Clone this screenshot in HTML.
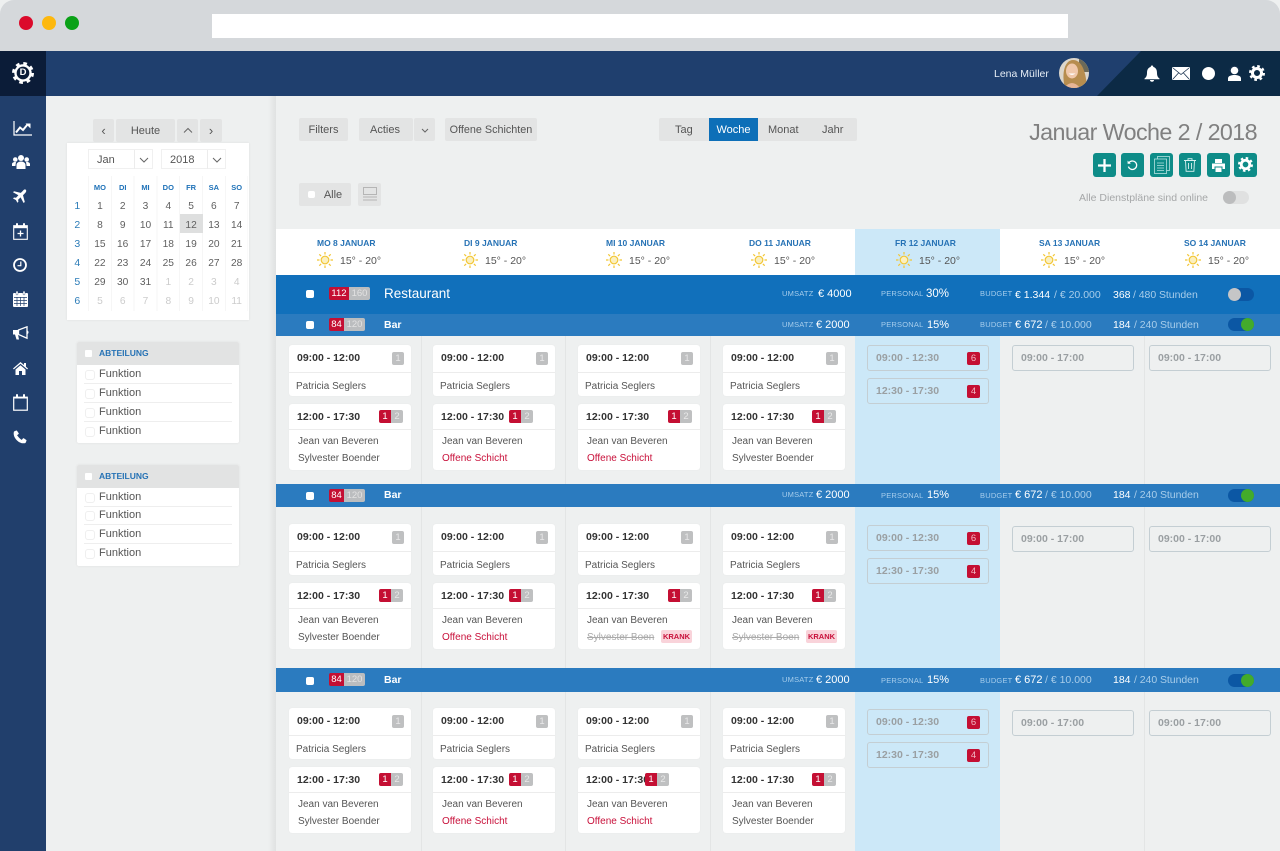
<!DOCTYPE html>
<html lang="de"><head><meta charset="utf-8"><title>Dienstplan</title>
<style>
*{box-sizing:border-box}
html,body{margin:0;padding:0;width:1280px;height:851px;overflow:hidden;background:#eef0f0;font-family:"Liberation Sans",Arial,sans-serif;color:#555}
body{filter:blur(.3px)}
.x{position:absolute}
.t{position:absolute;white-space:nowrap;line-height:14px}
svg{position:absolute;display:block}
.btn{position:absolute;background:#e3e4e4;border-radius:2px;font-size:11px;color:#555;text-align:center;line-height:24px;height:23px;white-space:nowrap}
.cal{position:absolute;left:66px;top:179px;width:183px;display:grid;grid-template-columns:22.5px repeat(7,22.8px);grid-template-rows:18px repeat(6,19px);font-size:10.2px;text-align:center;line-height:19px;color:#5f5f5f}
.cal b{font-size:7.5px;color:#1f72b8;line-height:18px}
.cal u{text-decoration:none;color:#2c7cb8;font-size:10.5px}
.cal s{text-decoration:none;color:#ccc}
.sel{position:absolute;background:#fff;height:20px;border:1px solid #f0f0f0;font-size:11px;line-height:20px;padding-left:8px}
.pn{position:absolute;left:77px;width:162px;height:101px;background:#fff;border-radius:2px;box-shadow:0 0 2px #ddd}
.pn .h{position:absolute;left:0;top:0;width:162px;height:23px;background:#e2e3e3;border-radius:2px 2px 0 0}
.pn .h i{position:absolute;left:8px;top:8px;width:7px;height:7px;background:#fff;border-radius:1px}
.pn .h b{position:absolute;left:22px;top:5px;font-size:8.5px;line-height:13px;color:#2672b5}
.pn .f{position:absolute;left:7px;width:148px;height:19px;font-size:11px;line-height:19px;padding-left:15px;color:#555;border-bottom:1px solid #eee}
.pn .f:before{content:"";position:absolute;left:1px;top:5px;width:8px;height:8px;border:1px solid #efefef;border-radius:3px}
.pn .f:last-child{border:0}
.dh{position:absolute;top:237px;font-size:8.5px;font-weight:bold;color:#2672b5;line-height:12px;white-space:nowrap}
.tm{position:absolute;top:254px;font-size:10.5px;color:#555;line-height:14px;white-space:nowrap}
.row{position:absolute;left:276px;width:1004px;background:#2b7bbf;color:#fff}
.row .t{color:#fff}
.lb{font-size:7.5px;color:#a6cdec!important;letter-spacing:.2px}
.n{font-size:11px}
.f2{color:#a8cdea!important}
.ck{position:absolute;left:30px;width:8px;height:8px;background:#fff;border-radius:2px}
.bd{position:absolute;left:53px;height:13px;font-size:9.5px;line-height:13px;text-align:center;color:#fff;font-style:normal}
.bd.r{background:#c40f33;border-radius:2px 0 0 2px}
.bd.g{background:#bbbdbf;border-radius:0 2px 2px 0;color:#e2e2e2}
.tg{position:absolute;left:952px;width:26px;height:13px;border-radius:7px;background:#0b57a4}
.tg i{position:absolute;top:0;width:13px;height:13px;border-radius:50%}
.sec{position:absolute;left:0;width:1280px;height:130px}
.c{position:absolute;width:122px;background:#fff;border-radius:3px;box-shadow:0 0 1px #e0e0e0}
.a{top:0;height:51px}
.b{top:59px;height:66px}
.c:before{content:"";position:absolute;left:0;right:0;height:1px;background:#ececec}
.a:before{top:27px}.b:before{top:25px}
.c b{position:absolute;left:8px;top:6px;font-size:10.5px;line-height:14px;color:#333;white-space:nowrap}
.c p{position:absolute;margin:0;font-size:10px;line-height:14px;color:#555;white-space:nowrap;left:7px}
.a p{top:35px}
.b p{left:9px;top:31px}
.b p+p{top:48px}
.c p.o{color:#c8103a}
.c p.k{color:#aaa;text-decoration:line-through}
.c em{position:absolute;font-style:normal;font-size:9.5px;line-height:13px;height:13px;width:12px;text-align:center;color:#fff;top:6px}
.c em.r{background:#c40f33;border-radius:2px 0 0 2px}
.c em.g{background:#bfc0c1;border-radius:0 2px 2px 0;color:#e8e8e8}
.c em.s{background:#bfc0c1;border-radius:2px;color:#e8e8e8;top:7px}
.kr{position:absolute;left:83px;top:47px;width:31px;height:13px;background:#f9d3da;border-radius:2px;color:#c8103a;font-size:7.5px;font-weight:bold;line-height:13px;text-align:center}
.o2{position:absolute;width:122px;height:26px;border:1px solid #c4ced3;border-radius:3px;font-size:10.5px;font-weight:bold;color:#9a9fa2;line-height:24px;padding-left:8px;white-space:nowrap}
.o2 i{position:absolute;right:8px;top:6px;width:13px;height:13px;background:#c40f33;border-radius:2px;color:#f0b8c4;font-size:9.5px;line-height:13px;text-align:center;font-style:normal;font-weight:normal}
.vl{position:absolute;width:1px;top:336px;bottom:0;background:#e3e5e5}
.tb{position:absolute;top:153px;width:23px;height:24px;border-radius:3px;background:#0e8c88}
</style></head><body>

<!-- browser chrome -->
<div class="x" style="left:0;top:0;width:1280px;height:51px;background:#d5d8db;border-radius:14px 14px 0 0"></div>
<div class="x" style="left:212px;top:14px;width:856px;height:24px;background:#fff"></div>
<div class="x" style="left:19px;top:16px;width:14px;height:14px;border-radius:50%;background:#db0a2b"></div>
<div class="x" style="left:42px;top:16px;width:14px;height:14px;border-radius:50%;background:#fdb80e"></div>
<div class="x" style="left:65px;top:16px;width:14px;height:14px;border-radius:50%;background:#0aa117"></div>

<!-- header -->
<div class="x" style="left:0;top:51px;width:1280px;height:45px;background:#1f3f6e"></div>
<svg style="left:1097px;top:51px" width="183" height="45"><polygon points="44,0 183,0 183,45 0,45" fill="#0c2a45"/></svg>
<div class="x" style="left:0;top:51px;width:46px;height:45px;background:#0b1c38"></div>
<svg style="left:12px;top:62px" width="22" height="22" viewBox="0 0 24 24"><circle cx="12" cy="12" r="10.500" fill="none" stroke="#fff" stroke-width="3" stroke-dasharray="4 4.250"/><circle cx="12" cy="12" r="8.200" fill="none" stroke="#fff" stroke-width="2.600"/></svg>
<div class="t" style="left:13px;top:66px;width:20px;text-align:center;font-size:9.500px;font-weight:bold;color:#fff">D</div>
<div class="t" style="left:994px;top:67px;font-size:10.500px;color:#e6edf5">Lena Müller</div>
<svg style="left:1059px;top:58px" width="30" height="30" viewBox="0 0 30 30"><defs><clipPath id="av"><circle cx="15" cy="15" r="15"/></clipPath></defs><g clip-path="url(#av)"><rect width="30" height="30" fill="#dcd6cc"/><rect x="20" width="10" height="14" fill="#6d6a58"/><path d="M6 30 C2 15 6 2 14 2 C23 2 27 14 28 30Z" fill="#b78d4f"/><ellipse cx="13" cy="13" rx="6" ry="7.500" fill="#f0c8ab"/><path d="M9.500 15.500 q3.500 3 7 0" fill="#fff"/><path d="M5 30 q8 -10 16 0Z" fill="#e7b596"/></g></svg>
<svg style="left:1144px;top:65px" width="16" height="17" viewBox="0 0 16 17"><path d="M8 0.500a1.200 1.200 0 0 1 1.200 1.400C12 2.600 13 5 13 8c0 3 1 4.500 2.500 5.500v.8H.5v-.8C2 12.500 3 11 3 8c0-3 1-5.400 3.800-6.100A1.200 1.200 0 0 1 8 .5z" fill="#fff"/><path d="M6 15a2 1.700 0 0 0 4 0z" fill="#fff"/></svg>
<svg style="left:1172px;top:67px" width="18" height="13" viewBox="0 0 18 13"><rect width="18" height="13" rx="1.500" fill="#fff"/><path d="M1 1l8 6.500L17 1M1 12l5.500-6M17 12l-5.500-6" fill="none" stroke="#1a3350" stroke-width=".8"/></svg>
<div class="x" style="left:1202px;top:67px;width:13px;height:13px;border-radius:50%;background:#fff"></div>
<svg style="left:1228px;top:66px" width="13" height="15" viewBox="0 0 13 15"><circle cx="6.500" cy="4.500" r="3.800" fill="#fff"/><path d="M0 15v-2.500C0 10 3 9 6.500 9S13 10 13 12.500V15z" fill="#fff"/><path d="M1.800 5V4a4.700 4 0 0 1 9.400 0v1" fill="none" stroke="#1a3350" stroke-width=".7"/></svg>
<svg style="left:1249px;top:65px" width="16" height="16" viewBox="0 0 24 24"><circle cx="12" cy="12" r="10.300" fill="none" stroke="#fff" stroke-width="3.400" stroke-dasharray="4 4.090"/><circle cx="12" cy="12" r="6.800" fill="none" stroke="#fff" stroke-width="4.500"/></svg>

<!-- sidebar -->
<div class="x" style="left:0;top:96px;width:46px;height:755px;background:#213f6c"></div>
<svg style="left:13px;top:120px" width="19" height="16" viewBox="0 0 19 16"><path d="M1 1v14h18" fill="none" stroke="#fff" stroke-width="1.200"/><path d="M3 12.500l4-5 3 2.500 4.500-5.500" fill="none" stroke="#fff" stroke-width="2"/><path d="M12.500 3.500h5v5z" fill="#fff"/></svg>
<svg style="left:12px;top:153px" width="18" height="18" viewBox="0 0 18 18"><circle cx="9" cy="5" r="3" fill="#fff"/><circle cx="3.300" cy="6.500" r="2.300" fill="#fff"/><circle cx="14.700" cy="6.500" r="2.300" fill="#fff"/><path d="M4.500 16v-4c0-2 2-3.500 4.500-3.500s4.500 1.500 4.500 3.500v4z" fill="#fff"/><path d="M0 13v-2c0-1 1.300-2 3-2h1l-.6 4zM18 13v-2c0-1-1.300-2-3-2h-1l.6 4z" fill="#fff"/></svg>
<svg style="left:13px;top:189px" width="14" height="14" viewBox="0 0 14 14"><path d="M12.800.8c.9.9.300 2.300-.6 3.200L10 6.200 11.800 13l-1.200 1-3-5.600-2.500 2.400.3 2-1 1-1.500-2.800L0 9.500l1-1 2 .3 2.400-2.500L0 3.300l1-1.100 6.800 1.700L10 1.700c.9-.9 1.900-1.800 2.800-.9z" fill="#fff"/></svg>
<svg style="left:13px;top:223px" width="15" height="17" viewBox="0 0 15 17"><rect x=".7" y="2.700" width="13.600" height="13.600" fill="none" stroke="#fff" stroke-width="1.100"/><rect x=".7" y="2.700" width="13.600" height="2.500" fill="#fff"/><rect x="3" y="0" width="2" height="4" rx="1" fill="#fff"/><rect x="10" y="0" width="2" height="4" rx="1" fill="#fff"/><path d="M7.500 7.500v6M4.500 10.500h6" stroke="#fff" stroke-width="1.300"/></svg>
<svg style="left:13px;top:258px" width="14" height="14" viewBox="0 0 14 14"><circle cx="7" cy="7" r="6" fill="none" stroke="#fff" stroke-width="1.800"/><path d="M7.800 3.500v4.200H4.500" fill="none" stroke="#fff" stroke-width="1.200"/></svg>
<svg style="left:13px;top:291px" width="15" height="16" viewBox="0 0 15 16"><rect y="2" width="15" height="14" rx="1" fill="#fff"/><rect x="3" y="0" width="2" height="4" rx="1" fill="#fff" stroke="#213f6c" stroke-width=".4"/><rect x="10" y="0" width="2" height="4" rx="1" fill="#fff" stroke="#213f6c" stroke-width=".4"/><path d="M1 6.500h13M1 9.500h13M1 12.500h13M4 6v9M7.500 6v9M11 6v9" stroke="#213f6c" stroke-width=".7"/></svg>
<svg style="left:13px;top:326px" width="16" height="15" viewBox="0 0 16 15"><path d="M0 4h5.500v4.500H0z" fill="#fff"/><path d="M5.500 4L14 .8v11.400L5.500 8.500z" fill="none" stroke="#fff" stroke-width="1.300"/><path d="M2 8.500h3l1 5H3.500z" fill="#fff"/><path d="M14.500 4.500a2 2 0 0 1 0 3.500z" fill="#fff"/></svg>
<svg style="left:13px;top:362px" width="15" height="13" viewBox="0 0 15 13"><path d="M7.500 0L15 6.500l-.8.900L7.500 1.800.8 7.400 0 6.500zM2.500 7.500l5-4.200 5 4.200V13H9V9H6v4H2.500z" fill="#fff"/><rect x="11" y="1" width="2" height="3.500" fill="#fff"/></svg>
<svg style="left:13px;top:394px" width="15" height="17" viewBox="0 0 15 17"><rect x=".7" y="3.200" width="13.600" height="13" fill="none" stroke="#fff" stroke-width="1.200"/><rect x=".7" y="3" width="13.600" height="1.500" fill="#fff"/><rect x="3" y="0" width="2" height="4" rx="1" fill="#fff"/><rect x="10" y="0" width="2" height="4" rx="1" fill="#fff"/></svg>
<svg style="left:13px;top:430px" width="14" height="14" viewBox="0 0 14 14"><path d="M3.200.5L1 1.500C.3 3.500.6 7 3.800 10.200 7 13.400 10.500 13.700 12.500 13l1-2.200c.1-.3 0-.6-.2-.8L10.800 8.300c-.3-.2-.6-.1-.8.100L8.800 9.900C7.500 9.200 4.800 6.500 4.100 5.200l1.500-1.200c.2-.2.300-.5.100-.8L4 .7C3.800.5 3.500.4 3.200.5z" fill="#fff"/></svg>

<!-- left panel -->
<div class="x" style="left:46px;top:96px;width:230px;height:755px;background:#eef0f0"></div>
<div class="x" style="left:268px;top:96px;width:8px;height:755px;background:linear-gradient(90deg,#eef0f0,#e0e2e2)"></div>

<div class="btn" style="left:93px;top:119px;width:21px;font-size:13px">&#8249;</div>
<div class="btn" style="left:116px;top:119px;width:59px;font-size:11px">Heute</div>
<div class="btn" style="left:177px;top:119px;width:21px"></div>
<svg style="left:183px;top:127px" width="10" height="7"><path d="M1 5.500L5 1.500l4 4" fill="none" stroke="#666" stroke-width="1"/></svg>
<div class="btn" style="left:200px;top:119px;width:22px;font-size:13px">&#8250;</div>

<div class="x" style="left:67px;top:143px;width:182px;height:177px;background:#fff;box-shadow:0 0 2px #ddd"></div>
<div class="sel" style="left:88px;top:149px;width:65px">Jan</div>
<div class="x" style="left:134px;top:150px;width:1px;height:19px;background:#ececec"></div>
<svg style="left:139px;top:157px" width="10" height="6"><path d="M1 1l4 4 4-4" fill="none" stroke="#666" stroke-width="1"/></svg>
<div class="sel" style="left:161px;top:149px;width:65px">2018</div>
<div class="x" style="left:207px;top:150px;width:1px;height:19px;background:#ececec"></div>
<svg style="left:212px;top:157px" width="10" height="6"><path d="M1 1l4 4 4-4" fill="none" stroke="#666" stroke-width="1"/></svg>
<div class="x" style="left:88px;top:176px;width:160px;height:135px;background:repeating-linear-gradient(90deg,#f6f6f6 0,#f6f6f6 1px,transparent 1px,transparent 22.800px)"></div>
<div class="x" style="left:180px;top:214px;width:23px;height:19px;background:#dedfdf"></div>
<div class="cal">
<span></span><b>MO</b><b>DI</b><b>MI</b><b>DO</b><b>FR</b><b>SA</b><b>SO</b>
<u>1</u><span>1</span><span>2</span><span>3</span><span>4</span><span>5</span><span>6</span><span>7</span>
<u>2</u><span>8</span><span>9</span><span>10</span><span>11</span><span>12</span><span>13</span><span>14</span>
<u>3</u><span>15</span><span>16</span><span>17</span><span>18</span><span>19</span><span>20</span><span>21</span>
<u>4</u><span>22</span><span>23</span><span>24</span><span>25</span><span>26</span><span>27</span><span>28</span>
<u>5</u><span>29</span><span>30</span><span>31</span><s>1</s><s>2</s><s>3</s><s>4</s>
<u>6</u><s>5</s><s>6</s><s>7</s><s>8</s><s>9</s><s>10</s><s>11</s>
</div>

<div class="pn" style="top:342px"><div class="h"><i></i><b>ABTEILUNG</b></div>
<div class="f" style="top:23px">Funktion</div><div class="f" style="top:42px">Funktion</div><div class="f" style="top:61px">Funktion</div><div class="f" style="top:80px">Funktion</div></div>
<div class="pn" style="top:465px"><div class="h"><i></i><b>ABTEILUNG</b></div>
<div class="f" style="top:23px">Funktion</div><div class="f" style="top:41px">Funktion</div><div class="f" style="top:60px">Funktion</div><div class="f" style="top:79px">Funktion</div></div>

<!-- toolbar -->
<div class="btn" style="left:299px;top:118px;width:49px">Filters</div>
<div class="btn" style="left:359px;top:118px;width:54px;padding-right:2px">Acties</div>
<div class="btn" style="left:414px;top:118px;width:21px"></div>
<svg style="left:421px;top:128px" width="8" height="5"><path d="M1 1l3 3 3-3" fill="none" stroke="#666" stroke-width="1"/></svg>
<div class="btn" style="left:445px;top:118px;width:92px;font-size:10.800px">Offene Schichten</div>
<div class="btn" style="left:659px;top:118px;width:198px;border-radius:2px"></div>
<div class="t" style="left:675px;top:123px;font-size:11px">Tag</div>
<div class="x" style="left:709px;top:118px;width:49px;height:23px;background:#0d6fb8;color:#fff;font-size:11px;line-height:24px;text-align:center">Woche</div>
<div class="t" style="left:768px;top:123px;font-size:11px">Monat</div>
<div class="t" style="left:822px;top:123px;font-size:11px">Jahr</div>
<div class="btn" style="left:299px;top:183px;width:52px;height:23px;line-height:25px;padding-left:16px">Alle</div>
<div class="x" style="left:308px;top:191px;width:7px;height:7px;background:#fff;border-radius:2px"></div>
<div class="btn" style="left:358px;top:183px;width:23px;height:23px"></div>
<svg style="left:363px;top:187px" width="14" height="15"><rect x=".5" y=".5" width="13" height="7" fill="none" stroke="#b5b5b5"/><path d="M0 10h14M0 13h14" stroke="#b5b5b5"/></svg>

<div class="t" style="left:1000px;right:23px;top:118px;font-size:23.300px;line-height:28px;color:#808080;text-align:right;letter-spacing:-.6px">Januar Woche 2 / 2018</div>

<div class="tb" style="left:1093px"></div>
<svg style="left:1098px;top:159px" width="13" height="13"><path d="M6.500 0v13M0 6.500h13" stroke="#fff" stroke-width="2.300"/></svg>
<div class="tb" style="left:1121px"></div>
<svg style="left:1126px;top:159px" width="12" height="12" viewBox="0 0 15 14"><path d="M3.500 4.500A5.300 5.300 0 1 1 3 9" fill="none" stroke="#fff" stroke-width="1.600"/><path d="M2 1.500v4h4z" fill="#fff"/></svg>
<div class="tb" style="left:1150px"></div>
<svg style="left:1154px;top:156px" width="16" height="18" viewBox="0 0 16 18"><rect x="3.500" y=".5" width="12" height="14" fill="none" stroke="#b5e2e0" stroke-width=".8"/><rect x=".5" y="3" width="12" height="14.500" fill="#0e8c88" stroke="#b5e2e0" stroke-width=".8"/><path d="M3 7h7M3 9.500h7M3 12h7M3 14.500h7" stroke="#b5e2e0" stroke-width=".8"/></svg>
<div class="tb" style="left:1179px;width:22px"></div>
<svg style="left:1184px;top:158px" width="12" height="14" viewBox="0 0 12 14"><path d="M0 2.500h12M4 2.500V.7h4v1.800M1.500 2.500l.6 10.800h7.800l.6-10.800M4.500 5v6M7.500 5v6" fill="none" stroke="#d8f0ef" stroke-width=".9"/></svg>
<div class="tb" style="left:1207px"></div>
<svg style="left:1212px;top:159px" width="13" height="13" viewBox="0 0 13 13"><path d="M3 0h7v4H3zM0 4.500h13V10h-2.500V7.500h-8V10H0zM3.500 8.500h6V13h-6z" fill="#fff"/></svg>
<div class="tb" style="left:1234px"></div>
<svg style="left:1238px;top:157px" width="15" height="15" viewBox="0 0 24 24"><circle cx="12" cy="12" r="10.300" fill="none" stroke="#fff" stroke-width="3.400" stroke-dasharray="4 4.090"/><circle cx="12" cy="12" r="6.800" fill="none" stroke="#fff" stroke-width="4.500"/></svg>

<div class="t" style="left:1079px;top:191px;font-size:10.500px;color:#a5a7a8">Alle Dienstpläne sind online</div>
<div class="x" style="left:1223px;top:191px;width:26px;height:13px;border-radius:7px;background:#e0e1e1"></div>
<div class="x" style="left:1223px;top:191px;width:13px;height:13px;border-radius:50%;background:#bcbdbe"></div>

<!-- day header -->
<div class="x" style="left:276px;top:229px;width:1004px;height:46px;background:#fff"></div>
<div class="x" style="left:855px;top:229px;width:145px;height:622px;background:#cce8f8"></div>
<div class="vl" style="left:421px"></div><div class="vl" style="left:565px"></div><div class="vl" style="left:710px"></div><div class="vl" style="left:1144px"></div>

<div class="dh" style="left:317px">MO 8 JANUAR</div>
<div class="dh" style="left:464px">DI 9 JANUAR</div>
<div class="dh" style="left:606px">MI 10 JANUAR</div>
<div class="dh" style="left:749px">DO 11 JANUAR</div>
<div class="dh" style="left:895px">FR 12 JANUAR</div>
<div class="dh" style="left:1039px">SA 13 JANUAR</div>
<div class="dh" style="left:1184px">SO 14 JANUAR</div>

<svg style="left:317px;top:252px" width="16" height="16" viewBox="0 0 16 16"><circle cx="8" cy="8" r="3.800" fill="#fbf0c0" stroke="#f2c635" stroke-width="1.200"/><path d="M8 0v2.500M8 13.500V16M0 8h2.500M13.500 8H16M2.300 2.300l1.800 1.800M11.900 11.900l1.800 1.800M2.300 13.700l1.800-1.800M11.900 4.100l1.800-1.800" stroke="#f2c635" stroke-width="1.200"/></svg>
<svg style="left:462px;top:252px" width="16" height="16" viewBox="0 0 16 16"><circle cx="8" cy="8" r="3.800" fill="#fbf0c0" stroke="#f2c635" stroke-width="1.200"/><path d="M8 0v2.500M8 13.500V16M0 8h2.500M13.500 8H16M2.300 2.300l1.800 1.800M11.900 11.900l1.800 1.800M2.300 13.700l1.800-1.800M11.900 4.100l1.800-1.800" stroke="#f2c635" stroke-width="1.200"/></svg>
<svg style="left:606px;top:252px" width="16" height="16" viewBox="0 0 16 16"><circle cx="8" cy="8" r="3.800" fill="#fbf0c0" stroke="#f2c635" stroke-width="1.200"/><path d="M8 0v2.500M8 13.500V16M0 8h2.500M13.500 8H16M2.300 2.300l1.800 1.800M11.900 11.900l1.800 1.800M2.300 13.700l1.800-1.800M11.900 4.100l1.800-1.800" stroke="#f2c635" stroke-width="1.200"/></svg>
<svg style="left:751px;top:252px" width="16" height="16" viewBox="0 0 16 16"><circle cx="8" cy="8" r="3.800" fill="#fbf0c0" stroke="#f2c635" stroke-width="1.200"/><path d="M8 0v2.500M8 13.500V16M0 8h2.500M13.500 8H16M2.300 2.300l1.800 1.800M11.900 11.900l1.800 1.800M2.300 13.700l1.800-1.800M11.900 4.100l1.800-1.800" stroke="#f2c635" stroke-width="1.200"/></svg>
<svg style="left:896px;top:252px" width="16" height="16" viewBox="0 0 16 16"><circle cx="8" cy="8" r="3.800" fill="#fbf0c0" stroke="#f2c635" stroke-width="1.200"/><path d="M8 0v2.500M8 13.500V16M0 8h2.500M13.500 8H16M2.300 2.300l1.800 1.800M11.900 11.900l1.800 1.800M2.300 13.700l1.800-1.800M11.900 4.100l1.800-1.800" stroke="#f2c635" stroke-width="1.200"/></svg>
<svg style="left:1041px;top:252px" width="16" height="16" viewBox="0 0 16 16"><circle cx="8" cy="8" r="3.800" fill="#fbf0c0" stroke="#f2c635" stroke-width="1.200"/><path d="M8 0v2.500M8 13.500V16M0 8h2.500M13.500 8H16M2.300 2.300l1.800 1.800M11.900 11.900l1.800 1.800M2.300 13.700l1.800-1.800M11.900 4.100l1.800-1.800" stroke="#f2c635" stroke-width="1.200"/></svg>
<svg style="left:1185px;top:252px" width="16" height="16" viewBox="0 0 16 16"><circle cx="8" cy="8" r="3.800" fill="#fbf0c0" stroke="#f2c635" stroke-width="1.200"/><path d="M8 0v2.500M8 13.500V16M0 8h2.500M13.500 8H16M2.300 2.300l1.800 1.800M11.900 11.900l1.800 1.800M2.300 13.700l1.800-1.800M11.900 4.100l1.800-1.800" stroke="#f2c635" stroke-width="1.200"/></svg>

<div class="tm" style="left:340px">15° - 20°</div>
<div class="tm" style="left:485px">15° - 20°</div>
<div class="tm" style="left:629px">15° - 20°</div>
<div class="tm" style="left:774px">15° - 20°</div>
<div class="tm" style="left:919px">15° - 20°</div>
<div class="tm" style="left:1064px">15° - 20°</div>
<div class="tm" style="left:1208px">15° - 20°</div>

<!-- Restaurant row -->
<div class="row" style="top:275px;height:39px;background:#1170bb">
<i class="ck" style="top:15px"></i>
<i class="bd r" style="top:12px;width:20px">112</i><i class="bd g" style="top:12px;left:73px;width:21px">160</i>
<div class="t" style="left:108px;top:12px;font-size:13.500px">Restaurant</div>
<div class="t lb" style="left:506px;top:12px">UMSATZ</div><div class="t n" style="left:542px;top:12px">€ 4000</div>
<div class="t lb" style="left:605px;top:12px">PERSONAL</div><div class="t n" style="left:650px;top:12px;font-size:11.500px">30%</div>
<div class="t lb" style="left:704px;top:12px">BUDGET</div><div class="t n" style="left:739px;top:13px;font-size:10.500px">€ 1.344</div><div class="t n f2" style="left:778px;top:13px;font-size:10.500px">/ € 20.000</div>
<div class="t n" style="left:837px;top:13px;font-size:10.500px">368</div><div class="t n f2" style="left:857px;top:13px;font-size:10.500px;letter-spacing:-.05px">/ 480 Stunden</div>
<div class="tg" style="top:13px"><i style="left:0;background:#c5c6c7"></i></div>
</div>

<!-- Bar rows -->
<div class="row" style="top:314px;height:22px">
<i class="ck" style="top:7px"></i>
<i class="bd r" style="top:4px;width:15px">84</i><i class="bd g" style="top:4px;left:68px;width:21px">120</i>
<div class="t" style="left:108px;top:4px;font-size:10.500px;font-weight:bold">Bar</div>
<div class="t lb" style="left:506px;top:4px">UMSATZ</div><div class="t n" style="left:540px;top:4px">€ 2000</div>
<div class="t lb" style="left:605px;top:4px">PERSONAL</div><div class="t n" style="left:651px;top:4px">15%</div>
<div class="t lb" style="left:704px;top:4px">BUDGET</div><div class="t n" style="left:739px;top:4px">€ 672</div><div class="t n f2" style="left:769px;top:4px;font-size:10.500px">/ € 10.000</div>
<div class="t n" style="left:837px;top:4px;font-size:10.500px">184</div><div class="t n f2" style="left:858px;top:4px;font-size:10.500px;letter-spacing:-.05px">/ 240 Stunden</div>
<div class="tg" style="top:4px"><i style="left:13px;background:#43ab2b"></i></div>
</div>
<div class="row" style="top:484px;height:23px">
<i class="ck" style="top:8px"></i>
<i class="bd r" style="top:5px;width:15px">84</i><i class="bd g" style="top:5px;left:68px;width:21px">120</i>
<div class="t" style="left:108px;top:4px;font-size:10.500px;font-weight:bold">Bar</div>
<div class="t lb" style="left:506px;top:4px">UMSATZ</div><div class="t n" style="left:540px;top:4px">€ 2000</div>
<div class="t lb" style="left:605px;top:5px">PERSONAL</div><div class="t n" style="left:651px;top:4px">15%</div>
<div class="t lb" style="left:704px;top:5px">BUDGET</div><div class="t n" style="left:739px;top:4px">€ 672</div><div class="t n f2" style="left:769px;top:4px;font-size:10.500px">/ € 10.000</div>
<div class="t n" style="left:837px;top:4px;font-size:10.500px">184</div><div class="t n f2" style="left:858px;top:4px;font-size:10.500px;letter-spacing:-.05px">/ 240 Stunden</div>
<div class="tg" style="top:5px"><i style="left:13px;background:#43ab2b"></i></div>
</div>
<div class="row" style="top:668px;height:24px">
<i class="ck" style="top:9px"></i>
<i class="bd r" style="top:5px;width:15px">84</i><i class="bd g" style="top:5px;left:68px;width:21px">120</i>
<div class="t" style="left:108px;top:5px;font-size:10.500px;font-weight:bold">Bar</div>
<div class="t lb" style="left:506px;top:5px">UMSATZ</div><div class="t n" style="left:540px;top:5px">€ 2000</div>
<div class="t lb" style="left:605px;top:6px">PERSONAL</div><div class="t n" style="left:651px;top:5px">15%</div>
<div class="t lb" style="left:704px;top:6px">BUDGET</div><div class="t n" style="left:739px;top:5px">€ 672</div><div class="t n f2" style="left:769px;top:5px;font-size:10.500px">/ € 10.000</div>
<div class="t n" style="left:837px;top:5px;font-size:10.500px">184</div><div class="t n f2" style="left:858px;top:5px;font-size:10.500px;letter-spacing:-.05px">/ 240 Stunden</div>
<div class="tg" style="top:6px"><i style="left:13px;background:#43ab2b"></i></div>
</div>

<!-- Section 1 -->
<div class="sec" style="top:345px">
<div class="c a" style="left:289px"><b>09:00 - 12:00</b><em class="s" style="left:103px">1</em><p>Patricia Seglers</p></div>
<div class="c b" style="left:289px"><b>12:00 - 17:30</b><em class="r" style="left:90px">1</em><em class="g" style="left:102px">2</em><p>Jean van Beveren</p><p>Sylvester Boender</p></div>
<div class="c a" style="left:433px"><b>09:00 - 12:00</b><em class="s" style="left:103px">1</em><p>Patricia Seglers</p></div>
<div class="c b" style="left:433px"><b>12:00 - 17:30</b><em class="r" style="left:76px">1</em><em class="g" style="left:88px">2</em><p>Jean van Beveren</p><p class="o">Offene Schicht</p></div>
<div class="c a" style="left:578px"><b>09:00 - 12:00</b><em class="s" style="left:103px">1</em><p>Patricia Seglers</p></div>
<div class="c b" style="left:578px"><b>12:00 - 17:30</b><em class="r" style="left:90px">1</em><em class="g" style="left:102px">2</em><p>Jean van Beveren</p><p class="o">Offene Schicht</p></div>
<div class="c a" style="left:723px"><b>09:00 - 12:00</b><em class="s" style="left:103px">1</em><p>Patricia Seglers</p></div>
<div class="c b" style="left:723px"><b>12:00 - 17:30</b><em class="r" style="left:89px">1</em><em class="g" style="left:101px">2</em><p>Jean van Beveren</p><p>Sylvester Boender</p></div>
<div class="o2" style="left:867px;top:0">09:00 - 12:30<i>6</i></div>
<div class="o2" style="left:867px;top:33px">12:30 - 17:30<i>4</i></div>
<div class="o2" style="left:1012px;top:0">09:00 - 17:00</div>
<div class="o2" style="left:1149px;top:0">09:00 - 17:00</div>
</div>

<!-- Section 2 -->
<div class="sec" style="top:524px">
<div class="c a" style="left:289px"><b>09:00 - 12:00</b><em class="s" style="left:103px">1</em><p>Patricia Seglers</p></div>
<div class="c b" style="left:289px"><b>12:00 - 17:30</b><em class="r" style="left:90px">1</em><em class="g" style="left:102px">2</em><p>Jean van Beveren</p><p>Sylvester Boender</p></div>
<div class="c a" style="left:433px"><b>09:00 - 12:00</b><em class="s" style="left:103px">1</em><p>Patricia Seglers</p></div>
<div class="c b" style="left:433px"><b>12:00 - 17:30</b><em class="r" style="left:76px">1</em><em class="g" style="left:88px">2</em><p>Jean van Beveren</p><p class="o">Offene Schicht</p></div>
<div class="c a" style="left:578px"><b>09:00 - 12:00</b><em class="s" style="left:103px">1</em><p>Patricia Seglers</p></div>
<div class="c b" style="left:578px"><b>12:00 - 17:30</b><em class="r" style="left:90px">1</em><em class="g" style="left:102px">2</em><p>Jean van Beveren</p><p class="k">Sylvester Boen</p><span class="kr">KRANK</span></div>
<div class="c a" style="left:723px"><b>09:00 - 12:00</b><em class="s" style="left:103px">1</em><p>Patricia Seglers</p></div>
<div class="c b" style="left:723px"><b>12:00 - 17:30</b><em class="r" style="left:89px">1</em><em class="g" style="left:101px">2</em><p>Jean van Beveren</p><p class="k">Sylvester Boen</p><span class="kr">KRANK</span></div>
<div class="o2" style="left:867px;top:1px">09:00 - 12:30<i>6</i></div>
<div class="o2" style="left:867px;top:34px">12:30 - 17:30<i>4</i></div>
<div class="o2" style="left:1012px;top:2px">09:00 - 17:00</div>
<div class="o2" style="left:1149px;top:2px">09:00 - 17:00</div>
</div>

<!-- Section 3 -->
<div class="sec" style="top:708px">
<div class="c a" style="left:289px"><b>09:00 - 12:00</b><em class="s" style="left:103px">1</em><p>Patricia Seglers</p></div>
<div class="c b" style="left:289px"><b>12:00 - 17:30</b><em class="r" style="left:90px">1</em><em class="g" style="left:102px">2</em><p>Jean van Beveren</p><p>Sylvester Boender</p></div>
<div class="c a" style="left:433px"><b>09:00 - 12:00</b><em class="s" style="left:103px">1</em><p>Patricia Seglers</p></div>
<div class="c b" style="left:433px"><b>12:00 - 17:30</b><em class="r" style="left:76px">1</em><em class="g" style="left:88px">2</em><p>Jean van Beveren</p><p class="o">Offene Schicht</p></div>
<div class="c a" style="left:578px"><b>09:00 - 12:00</b><em class="s" style="left:103px">1</em><p>Patricia Seglers</p></div>
<div class="c b" style="left:578px"><b>12:00 - 17:30</b><em class="r" style="left:67px">1</em><em class="g" style="left:79px">2</em><p>Jean van Beveren</p><p class="o">Offene Schicht</p></div>
<div class="c a" style="left:723px"><b>09:00 - 12:00</b><em class="s" style="left:103px">1</em><p>Patricia Seglers</p></div>
<div class="c b" style="left:723px"><b>12:00 - 17:30</b><em class="r" style="left:89px">1</em><em class="g" style="left:101px">2</em><p>Jean van Beveren</p><p>Sylvester Boender</p></div>
<div class="o2" style="left:867px;top:1px">09:00 - 12:30<i>6</i></div>
<div class="o2" style="left:867px;top:34px">12:30 - 17:30<i>4</i></div>
<div class="o2" style="left:1012px;top:2px">09:00 - 17:00</div>
<div class="o2" style="left:1149px;top:2px">09:00 - 17:00</div>
</div>
</body></html>
